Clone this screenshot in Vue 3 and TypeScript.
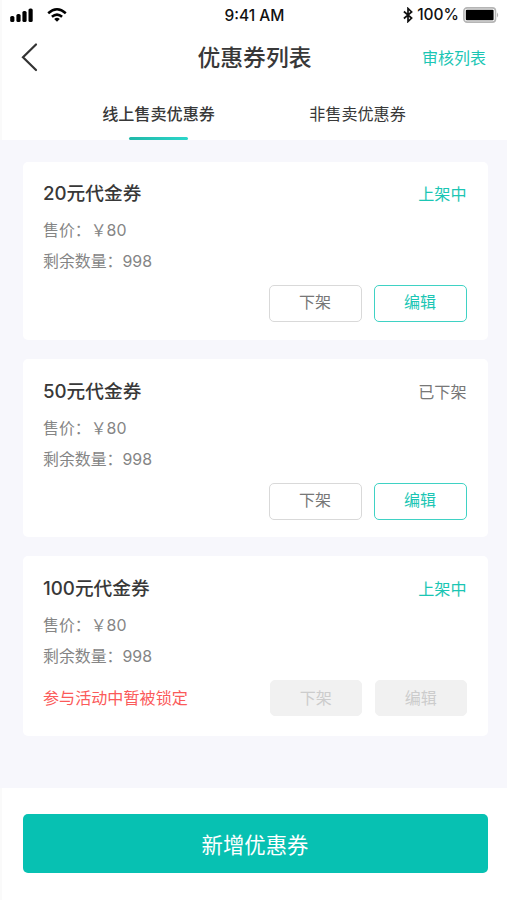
<script setup lang="ts">
interface Coupon {
  id: number
  name: string
  price: number
  remaining: number
  status: 'on' | 'off'
  locked: boolean
}

const tabs: string[] = ['线上售卖优惠券', '非售卖优惠券']
const activeTab = 0

const coupons: Coupon[] = [
  { id: 1, name: '20元代金券', price: 80, remaining: 998, status: 'on', locked: false },
  { id: 2, name: '50元代金券', price: 80, remaining: 998, status: 'off', locked: false },
  { id: 3, name: '100元代金券', price: 80, remaining: 998, status: 'on', locked: true },
]

const statusText: Record<Coupon['status'], string> = { on: '上架中', off: '已下架' }
</script>

<template>
  <div class="page">
    <header class="header">
      <div class="status-bar">
        <div class="signals">
          <svg class="cell" width="24" height="16" viewBox="0 0 24 16">
            <rect x="0.2" y="9" width="4.2" height="6" rx="1.6" />
            <rect x="6.4" y="7" width="4.2" height="8" rx="1.6" />
            <rect x="12.4" y="4" width="4.2" height="11" rx="1.6" />
            <rect x="18.5" y="1.5" width="4.2" height="13.5" rx="1.6" />
          </svg>
          <svg class="wifi" width="20" height="16" viewBox="0 0 20 16">
            <path d="M1.2 6.2Q10 -1.6 18.8 6.2" />
            <path d="M4.9 9.8Q10 5.4 15.1 9.8" />
            <path class="dot" d="M7.2 11.9Q10 9.7 12.8 11.9L10 14.8Z" />
          </svg>
        </div>
        <span class="time">9:41 AM</span>
        <div class="power">
          <svg class="bluetooth" width="10" height="16" viewBox="0 0 10 16">
            <path d="M0.9 4.5L8.6 11L5 14.5V1.5L8.6 5L0.9 11.5" />
          </svg>
          <span class="percent">100%</span>
          <svg class="battery" width="36" height="16" viewBox="0 0 36 16">
            <rect x="0.9" y="0.9" width="31.6" height="14.2" rx="3.2" fill="#fff" stroke="#b5b5b5" stroke-width="1.6" />
            <rect x="2.8" y="2.8" width="27.8" height="10.4" rx="1" fill="#000" />
            <path d="M34 5.5Q36.4 8 34 10.5Z" fill="#b5b5b5" />
          </svg>
        </div>
      </div>
      <div class="nav">
        <svg class="back" width="18" height="30" viewBox="0 0 18 30">
          <path d="M15 2.5L2 15.3L15 28" />
        </svg>
        <h1 class="title">优惠券列表</h1>
        <a class="audit">审核列表</a>
      </div>
      <nav class="tabs">
        <div v-for="(tab, i) in tabs" :key="tab" class="tab" :class="{ active: i === activeTab }">
          {{ tab }}
        </div>
      </nav>
    </header>

    <main class="list">
      <section v-for="c in coupons" :key="c.id" class="card" :class="{ locked: c.locked }">
        <div class="card-head">
          <h2 class="name">{{ c.name }}</h2>
          <span class="state" :class="c.status">{{ statusText[c.status] }}</span>
        </div>
        <p class="info">售价：￥{{ c.price }}</p>
        <p class="info">剩余数量：{{ c.remaining }}</p>
        <div class="actions">
          <span v-if="c.locked" class="lock">参与活动中暂被锁定</span>
          <button class="btn" :disabled="c.locked">下架</button>
          <button class="btn primary" :disabled="c.locked">编辑</button>
        </div>
      </section>
    </main>

    <footer class="footer">
      <button class="add">新增优惠券</button>
    </footer>
  </div>
</template>

<style>
body {
  margin: 0;
  background: #f7f7fc;
}
</style>

<style scoped>
.page {
  box-sizing: border-box;
  height: 900px;
  display: flex;
  flex-direction: column;
  overflow: hidden;
  background: #f7f7fc;
  color: #383838;
  font-family: Inter, "Noto Sans CJK SC", sans-serif;
}
.header,
.footer {
  box-sizing: border-box;
  background: #fff;
  border-left: 2px solid #fafafa;
}
.header {
  height: 140px;
}
.status-bar {
  display: grid;
  grid-template-columns: 1fr auto 1fr;
  align-items: center;
  height: 30px;
  padding: 0 8px;
  color: #111;
}
.signals {
  display: flex;
  gap: 12.5px;
  margin-top: -1px;
}
.wifi {
  fill: none;
  stroke: #000;
  stroke-width: 2.5;
}
.wifi .dot {
  fill: #000;
  stroke: none;
}
.time,
.percent {
  font-size: 15.5px;
  font-weight: 500;
  line-height: 20px;
}
.time {
  padding-top: 1px;
}
.power {
  display: flex;
  justify-content: flex-end;
  align-items: center;
  margin-top: -1px;
}
.bluetooth {
  margin-right: 4px;
  fill: none;
  stroke: #111;
  stroke-width: 1.7;
}
.percent {
  margin-right: 4px;
}
.nav {
  display: grid;
  grid-template-columns: 1fr auto 1fr;
  align-items: center;
  height: 56px;
  padding: 0 21px 0 20px;
}
.back {
  margin: -2px 0 0 -1px;
  fill: none;
  stroke: #333;
  stroke-width: 2.2;
  stroke-linecap: round;
}
.title {
  margin: 0;
  padding-left: 1px;
  font-size: 22.8px;
  font-weight: 500;
  line-height: 32px;
}
.audit {
  justify-self: end;
  font-size: 16px;
  line-height: 24px;
  color: #1bc6b4;
}
.tabs {
  display: flex;
  justify-content: space-around;
  height: 54px;
  padding: 0 54px 0 53px;
}
.tab {
  display: flex;
  flex-direction: column;
  align-items: center;
  justify-content: space-between;
  padding-top: 16px;
  font-size: 16.1px;
  line-height: 24px;
}
.tab.active {
  font-weight: 500;
}
.tab.active::after {
  content: "";
  width: 59px;
  height: 3px;
  border-radius: 1.5px;
  background: linear-gradient(90deg, #20b8a8, #2bd6ca);
}
.list {
  flex: 1;
  display: flex;
  flex-direction: column;
  gap: 19px;
  padding: 22px 19.5px 0 22.5px;
}
.card {
  box-sizing: border-box;
  height: 178px;
  padding: 18px 21px 0 20.5px;
  border-radius: 5px;
  background: #fff;
}
.card + .card {
  padding-top: 19px;
}
.card.locked {
  height: 180px;
}
.card-head {
  display: flex;
  justify-content: space-between;
  align-items: center;
  height: 28px;
  margin-bottom: 7px;
}
.name {
  margin: 0;
  font-size: 18.7px;
  font-weight: 500;
  line-height: 28px;
}
.state {
  font-size: 16.1px;
  line-height: 24px;
}
.state.on {
  color: #1bc6b4;
}
.state.off {
  color: #777;
}
.info {
  margin: 0;
  font-size: 15.9px;
  line-height: 31px;
  color: #858585;
}
.actions {
  display: flex;
  justify-content: flex-end;
  align-items: center;
  gap: 12px;
  margin-top: 8px;
}
.lock {
  margin-right: auto;
  font-size: 16.1px;
  line-height: 24px;
  color: #fb5a5a;
}
.btn {
  box-sizing: border-box;
  width: 93px;
  height: 36.5px;
  padding: 0 0 2px;
  border: 1px solid #d9d9d9;
  border-radius: 5px;
  background: #fff;
  color: #777;
  font: inherit;
  font-size: 16px;
  line-height: 24px;
}
.btn.primary {
  border-color: #3fd2c4;
  color: #1bc6b4;
}
.locked .actions {
  gap: 13.5px;
}
.btn:disabled {
  width: 91.5px;
  height: 35.5px;
  padding-bottom: 0;
  border-color: #f1f1f1;
  background: #f1f1f1;
  color: #ccc;
}
.footer {
  height: 112px;
  padding: 26px 19.5px 0 20.5px;
}
.add {
  display: block;
  width: 100%;
  height: 59px;
  padding: 2px 0 0;
  border: 0;
  border-radius: 5px;
  background: #07c1b2;
  color: #fff;
  font: inherit;
  font-size: 21.4px;
  line-height: 32px;
}
</style>
